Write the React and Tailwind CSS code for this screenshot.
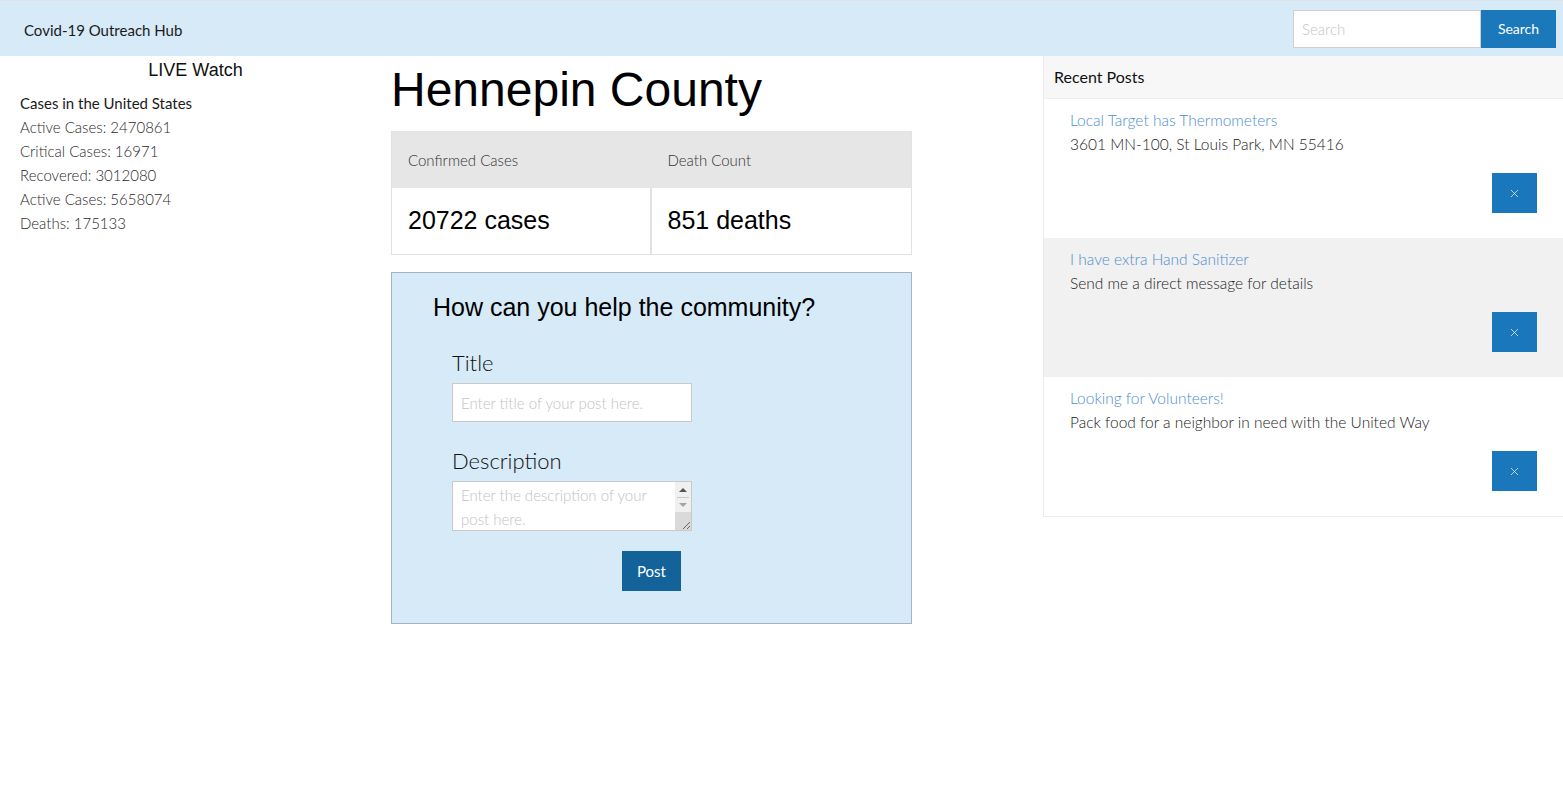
import { X } from 'lucide-react';

const stats = [
  ['Active Cases', '2470861'],
  ['Critical Cases', '16971'],
  ['Recovered', '3012080'],
  ['Active Cases', '5658074'],
  ['Deaths', '175133'],
];

const posts = [
  { title: 'Local Target has Thermometers', body: '3601 MN-100, St Louis Park, MN 55416', bg: 'bg-white' },
  { title: 'I have extra Hand Sanitizer', body: 'Send me a direct message for details', bg: 'bg-[#f1f1f1]' },
  { title: 'Looking for Volunteers!', body: 'Pack food for a neighbor in need with the United Way', bg: 'bg-white' },
];

export default function App() {
  return (
    <div className="min-h-[802px] bg-white text-[#212529] font-['Lato',sans-serif]">
      {/* Navbar */}
      <nav className="h-[56px] border-t border-[#dde3e8] bg-[#d6eaf8] flex items-center justify-between pl-6 pr-[7px]">
        <span className="text-[15px] leading-[20px] mt-[2px] text-[#1b1b1b]">Covid-19 Outreach Hub</span>
        <div className="flex">
          <input
            type="text"
            placeholder="Search"
            className="w-[188px] h-[38px] bg-white border border-[#cfcfcf] px-2 text-[15px] font-light placeholder:text-[#c4c4c4] outline-none"
          />
          <button className="w-[75px] h-[38px] bg-[#1a78bb] text-white text-[14px]">Search</button>
        </div>
      </nav>

      <div className="flex items-start">
        {/* Live watch */}
        <aside className="w-[391px] shrink-0">
          <h3 className="text-center font-['Liberation_Sans',Arial,sans-serif] text-[18px] leading-[26px] mt-[1px] text-[#111]">LIVE Watch</h3>
          <div className="pl-5 mt-[8px]">
            <p className="text-[15px] leading-[24px] text-[#1b1b1b]">Cases in the United States</p>
            {stats.map(([k, v], i) => (
              <p key={i} className="text-[15px] leading-[24px] font-light text-[#2a2a2a]">{k}: {v}</p>
            ))}
          </div>
        </aside>

        {/* County */}
        <main className="w-[521px] shrink-0">
          <h1 className="font-['Liberation_Sans',Arial,sans-serif] text-[48px] leading-[56px] mt-[6px] text-black">Hennepin County</h1>
          <div className="mt-[13px] border border-[#e2e2e2]">
            <div className="grid grid-cols-2 bg-[#e6e6e6] h-[56px]">
              <div className="pl-4 flex items-center text-[15px] font-light text-[#333]">Confirmed Cases</div>
              <div className="pl-4 flex items-center text-[15px] font-light text-[#333]">Death Count</div>
            </div>
            <div className="grid grid-cols-2 h-[66px]">
              <div className="pl-4 flex items-center border-r-2 border-[#e2e2e2] font-['Liberation_Sans',Arial,sans-serif] text-[25px] text-black">20722 cases</div>
              <div className="pl-4 flex items-center font-['Liberation_Sans',Arial,sans-serif] text-[25px] text-black">851 deaths</div>
            </div>
          </div>

          <form className="mt-[17px] h-[352px] bg-[#d6eaf8] border border-[#a3b5c4] pt-[19px]" onSubmit={(e) => e.preventDefault()}>
            <h2 className="pl-[41px] font-['Liberation_Sans',Arial,sans-serif] text-[25px] leading-[30px] text-black">How can you help the community?</h2>
            <div className="pl-[60px] mt-[27px]">
              <label className="block text-[22px] font-light leading-[28px] text-[#111]">Title</label>
              <input
                type="text"
                placeholder="Enter title of your post here."
                className="mt-[6px] block w-[240px] h-[39px] bg-white border border-[#c9c9c9] px-2 text-[15px] font-light placeholder:text-[#c2c2c2] outline-none"
              />
              <label className="block mt-[25px] text-[22px] font-light leading-[28px] text-[#111]">Description</label>
              <div className="relative mt-[6px] w-[240px] h-[50px]">
                <textarea
                  placeholder="Enter the description of your post here."
                  className="block w-full h-full bg-white border border-[#c9c9c9] pl-2 pr-[22px] py-[1px] text-[15px] leading-[24px] font-light placeholder:text-[#c2c2c2] outline-none resize-none overflow-hidden"
                />
                {/* fake scrollbar */}
                <div className="absolute right-[1px] top-[1px] bottom-[1px] w-[16px] bg-[#f0f0f0] flex flex-col items-center">
                  <div className="h-[15px] flex items-center justify-center">
                    <div className="w-0 h-0 border-l-[4px] border-r-[4px] border-b-[4px] border-l-transparent border-r-transparent border-b-[#555]" />
                  </div>
                  <div className="w-[12px] h-px bg-[#c8c8c8]" />
                  <div className="h-[14px] flex items-center justify-center">
                    <div className="w-0 h-0 border-l-[4px] border-r-[4px] border-t-[4px] border-l-transparent border-r-transparent border-t-[#a3a3a3]" />
                  </div>
                  <div className="flex-1 w-full bg-[#dadada] relative">
                    <svg className="absolute right-0 bottom-0" width="10" height="10" viewBox="0 0 10 10">
                      <path d="M9 2 L2 9 M9 6 L6 9" stroke="#666" strokeWidth="1" />
                    </svg>
                  </div>
                </div>
              </div>
            </div>
            <div className="flex justify-center mt-[20px]">
              <button className="w-[59px] h-[40px] bg-[#13629a] text-white text-[15px]">Post</button>
            </div>
          </form>
        </main>

        <div className="w-[131px] shrink-0" />

        {/* Recent posts */}
        <section className="flex-1 border-l border-b border-[#ececec]">
          <div className="h-[43px] bg-[#f7f7f7] border-b border-[#efefef] pl-[10px] flex items-center text-[16px] text-[#111]">Recent Posts</div>
          {posts.map((p) => (
            <div key={p.title} className={`${p.bg} h-[139px] pl-[26px] pr-[26px] pt-[9px]`}>
              <p className="text-[15.5px] leading-[24px] font-light text-[#4d8fcf]">{p.title}</p>
              <p className="text-[15.5px] leading-[24px] font-light text-[#222]">{p.body}</p>
              <div className="flex justify-end mt-[17px]">
                <button className="w-[45px] h-[40px] bg-[#1a77bb] flex items-center justify-center">
                  <X size={13} strokeWidth={1.25} className="text-white" />
                </button>
              </div>
            </div>
          ))}
        </section>
      </div>
    </div>
  );
}
